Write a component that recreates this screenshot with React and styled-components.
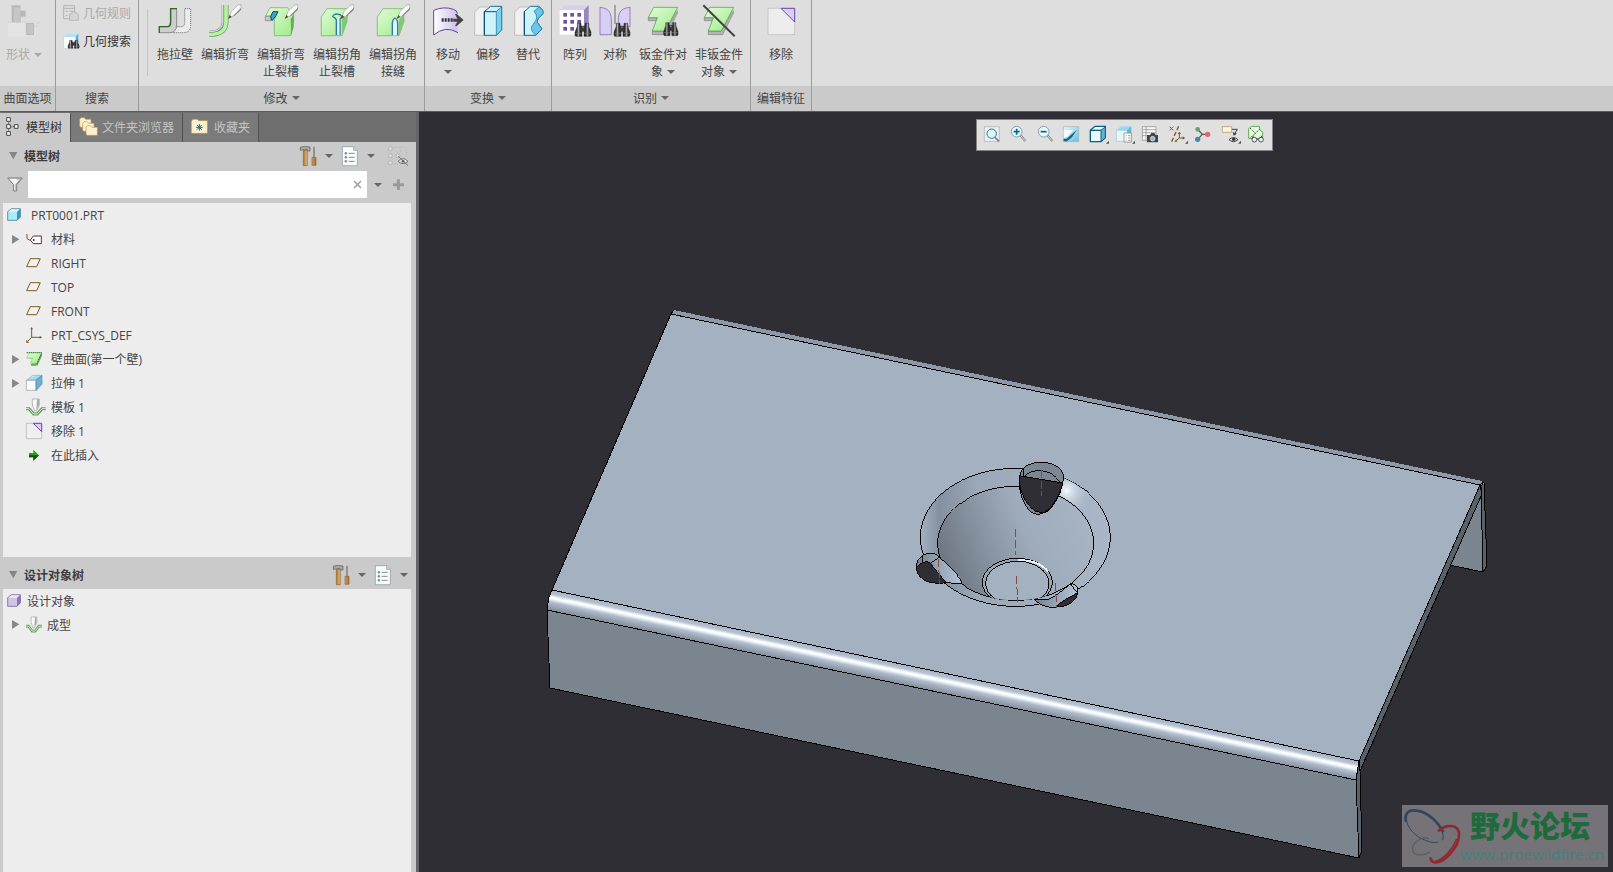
import React, { useState } from 'react'
import styled, { createGlobalStyle } from 'styled-components'

const GlobalStyle = createGlobalStyle`
  * {
    box-sizing: border-box;
  }

  body {
    margin: 0;
    font-family: 'Open Sans', 'Noto Sans CJK SC', sans-serif;
    font-size: 12px;
    color: #444;
  }

  button {
    border: 0;
    padding: 0;
    background: none;
    font: inherit;
    color: inherit;
  }
`

const Page = styled.div`
  display: flex;
  flex-direction: column;
  height: 100vh;
  background: #2f2e35;
`

const Ribbon = styled.header`
  display: flex;
  flex: none;
  background: linear-gradient(#dedede 86px, #cacaca 86px);
  border-bottom: 1px solid #5a5a5a;
`

const Group = styled.section`
  display: flex;
  flex-direction: column;
  border-right: 1px solid #9b9b9b;
`

const GroupBody = styled.div`
  display: flex;
  height: 86px;
  padding: ${props => props.$pad || '0 3px'};
`

const GroupTitle = styled.div`
  display: flex;
  align-items: center;
  justify-content: center;
  gap: 4px;
  height: 25px;
  padding-bottom: 2px;
  white-space: nowrap;
`

const Separator = styled.div`
  width: 1px;
  height: 67px;
  margin: 9px 5px 0;
  background: #c2c2c2;
`

const RibbonButton = styled.button`
  display: flex;
  flex-direction: column;
  align-items: center;
  width: ${props => props.$width}px;
  padding-top: 4px;
  line-height: 17px;
  color: ${props => (props.disabled ? '#a9a9a9' : '#444')};
`

const Label = styled.span`
  display: flex;
  align-items: center;
  gap: 4px;
  height: 17px;
  white-space: nowrap;
`

const Labels = styled.span`
  display: flex;
  flex-direction: column;
  align-items: center;
  margin-top: 10px;
`

const SearchList = styled.div`
  display: flex;
  flex-direction: column;
`

const SearchButton = styled.button`
  display: flex;
  align-items: center;
  gap: 4px;
  height: 28px;
  padding-bottom: 2px;
  color: ${props => (props.disabled ? '#a9a9a9' : '#333')};
`

const Caret = styled.span`
  flex: none;
  border: 4px solid transparent;
  border-top-color: ${props => props.$color || '#666'};
  border-bottom: 0;
`

const Svg = styled.svg`
  display: block;
  flex: none;
  overflow: visible;
`

const Main = styled.main`
  display: flex;
  flex: 1;
  min-height: 0;
`

const Panel = styled.aside`
  display: flex;
  flex-direction: column;
  flex: none;
  width: 419px;
  background: #cacaca;
  border-right: 3px solid #66656a;
`

const Tabs = styled.div`
  display: flex;
  height: 30px;
  padding-top: 1px;
  background: #6e6e6e;
`

const Tab = styled.button`
  display: flex;
  align-items: center;
  gap: ${props => props.$gap}px;
  padding: 0 8px 2px ${props => props.$left}px;
  border-right: 1px solid #515151;
  background: ${props => (props.$active ? '#cacaca' : '#7a7a7a')};
  color: ${props => (props.$active ? '#333' : '#c4c4c4')};
`

const PanelHeader = styled.div`
  display: flex;
  align-items: center;
  padding: ${props => props.$pad};
`

const PanelTitle = styled.h2`
  flex: 1;
  margin: 0 0 0 6px;
  font-size: 12px;
  font-weight: 700;
  color: #3c3c3c;
`

const HeaderTools = styled.div`
  display: flex;
  align-items: center;
  gap: 9px;
`

const IconButton = styled.button`
  display: flex;
  align-items: center;
  gap: 9px;
`

const HideButton = styled(IconButton)`
  padding-left: 4px;
`

const FilterRow = styled.div`
  display: flex;
  align-items: center;
  height: 27px;
  margin-bottom: 5px;
  padding: 0 12px 0 7px;
  gap: 5px;
`

const FilterBox = styled.div`
  display: flex;
  align-items: center;
  flex: 1;
  height: 27px;
  padding-right: 5px;
  background: #fff;
`

const FilterInput = styled.input`
  flex: 1;
  min-width: 0;
  height: 27px;
  padding: 0 6px;
  border: 0;
  outline: 0;
  background: transparent;
  font: inherit;
`

const FilterTools = styled.div`
  display: flex;
  align-items: center;
  gap: 11px;
  padding-left: 2px;
`

const Tree = styled.ul`
  flex: ${props => props.$grow} 1 0;
  min-height: 0;
  margin: 0 5px 0 3px;
  padding: 0;
  overflow: hidden;
  list-style: none;
  background: #ededed;
`

const TreeRow = styled.li`
  display: flex;
  align-items: center;
  height: 24px;
  padding-left: ${props => (props.$root ? 4 : 9)}px;
  white-space: nowrap;
`

const Expander = styled.span`
  width: 14px;
`

const TreeText = styled.span`
  margin-left: ${props => props.$gap}px;
`

const View = styled.section`
  position: relative;
  flex: 1;
  min-width: 0;
  overflow: hidden;
`

const Scene = styled.svg`
  display: block;
  width: 100%;
  height: 100%;
`

const ViewBar = styled.div`
  position: absolute;
  top: 7px;
  right: 340px;
  display: flex;
  align-items: center;
  justify-content: space-between;
  width: 297px;
  height: 32px;
  padding: 0 8px 2px 7px;
  border: 1px solid #858585;
  background: #e0e0e0;
`

const Watermark = styled.div`
  position: absolute;
  right: 5px;
  bottom: 5px;
  display: flex;
  width: 206px;
  height: 62px;
  background: #757378;
`

const WatermarkText = styled.div`
  display: flex;
  flex-direction: column;
  align-items: flex-end;
  flex: 1;
  padding-right: 4px;
`

const WatermarkName = styled.div`
  padding-right: 14px;
  font-family: 'Noto Sans CJK SC', sans-serif;
  font-size: 30px;
  font-weight: 900;
  line-height: 38px;
  color: #1f6a3c;
`

const WatermarkUrl = styled.a`
  font-family: 'Open Sans', sans-serif;
  font-size: 15px;
  line-height: 22px;
  color: #44807c;
  text-decoration: none;
`

// every glyph is drawn on a grid three times finer than its size on screen
const Icon = ({ x, y = 12, w = 32, h = 32, children }) => (
  <Svg width={w} height={h} viewBox={`${x} ${y} ${w * 3} ${h * 3}`} aria-hidden="true">
    {children}
  </Svg>
)

const Defs = () => (
  <Svg width="0" height="0" aria-hidden="true">
    <defs>
      <linearGradient id="green" x1="0" y1="0" x2="1" y2="1">
        <stop offset="0" stopColor="#e2fbd8" />
        <stop offset="1" stopColor="#9deb88" />
      </linearGradient>
      <linearGradient id="metal">
        <stop offset="0" stopColor="#1c1c1c" />
        <stop offset="0.3" stopColor="#3a3a3a" />
        <stop offset="0.5" stopColor="#a8a8a8" />
        <stop offset="0.7" stopColor="#333" />
        <stop offset="1" stopColor="#1c1c1c" />
      </linearGradient>
      <linearGradient id="sky" x1="0" y1="0" x2="1" y2="1">
        <stop offset="0" stopColor="#e6f8fe" />
        <stop offset="1" stopColor="#62bfe2" />
      </linearGradient>
      <linearGradient id="lilac">
        <stop offset="0" stopColor="#fff" />
        <stop offset="1" stopColor="#cdbfe8" />
      </linearGradient>
      <linearGradient id="wood">
        <stop offset="0" stopColor="#a87532" />
        <stop offset="0.4" stopColor="#f3d595" />
        <stop offset="1" stopColor="#a06c2c" />
      </linearGradient>
    </defs>
  </Svg>
)

const Pen = ({ x = 0 }) => (
  <g transform={`translate(${x} 0)`}>
    <path d="M108 53 L114 34 L135 14 L143 14 L143 27 L123 47 Z" fill="#f8f8f8" stroke="#a5a5a5" strokeWidth="2" />
    <path d="M120 47 L143 24 V29 L123 48 Z" fill="#777" />
    <path d="M104 57 L109 45 L115 51 Z" fill="#5a4436" />
  </g>
)

const Binoculars = ({ x = 0, y = 0 }) => (
  <g transform={`translate(${x} ${y})`} stroke="#2c2c2c" strokeWidth="1.5" strokeLinejoin="round">
    <path d="M7 3 H18 V10 L21 16 V42 H2 L0 38 V30 L7 12 Z" fill="url(#metal)" />
    <path d="M30 3 H41 V12 L48 30 V38 L46 42 H27 V16 L30 10 Z" fill="url(#metal)" />
    <path d="M18 11 H30 V27 H18 Z" fill="#3a3a3a" />
    <path d="M22 14 H26" stroke="#bbb" strokeWidth="3" />
    <path d="M1 33 H20 M28 33 H47" stroke="#8a8a8a" strokeWidth="2" />
  </g>
)

const ShapeIcon = () => (
  <Icon x={24}>
    <path d="M24 67 H107 V109 H24 Z" fill="#e4e4e4" />
    <path d="M35 16 H61 V32 H77 V50 H62 V67 H35 Z" fill="#b8b8b8" />
    <path d="M41 22 H61 V67 H41 Z" fill="#c6c6c6" />
    <path d="M80 70 H101 V104 H80 Z" fill="#c5c5c5" stroke="#a9a9a9" strokeWidth="2" />
    <path d="M24 67 H78 V104 M102 80 H112 V67 H120" fill="none" stroke="#bcbcbc" strokeWidth="2" strokeDasharray="3" />
  </Icon>
)

const DragWallIcon = () => (
  <Icon x={477}>
    <path d="M520 98 V80 H543 Q554 80 554 68 V26 H572 V76 Q572 98 550 98 Z" fill="#ececec" stroke="#666" strokeWidth="3" strokeDasharray="3 3" />
    <path d="M478 80 H500 Q511 80 511 68 V26 H530 V75 Q530 98 508 98 H478 Z" fill="#cecece" stroke="#8c8c8c" strokeWidth="3" />
    <path d="M478 99 V80 H500 Q512 80 512 68 V26 H531" fill="none" stroke="#2d6b2b" strokeWidth="4" />
  </Icon>
)

const EditBendIcon = () => (
  <Icon x={627}>
    <path d="M627 103 C662 103 678 92 678 65 V15" fill="none" stroke="#4fa342" strokeWidth="15" />
    <path d="M627 103 C662 103 678 92 678 65 V15" fill="none" stroke="#b5f2a3" strokeWidth="11" />
    <path d="M627 95 C657 95 668 84 668 62 V15" fill="none" stroke="#8e8e8e" strokeWidth="6" />
    <path d="M627 95 C657 95 668 84 668 62 V15" fill="none" stroke="#e2e2e2" strokeWidth="3" />
    <Pen x={580} />
  </Icon>
)

const BendReliefIcon = () => (
  <Icon x={45}>
    <path d="M47 48 L60 23 H112 L131 40 V60 L122 107 H73 V60 L84 36 H68 L62 48 Z" fill="url(#green)" stroke="#63ad53" strokeWidth="2" />
    <path d="M122 58 L131 42 V80 L124 107 Z" fill="#68ae58" />
    <path d="M46 49 H62 V62 H46 Z" fill="#cacaca" stroke="#777" strokeWidth="2" />
    <path d="M62 50 L69 35 H84 L75 51 L66 62 Z" fill="#3ba5c9" stroke="#124d6b" strokeWidth="3" />
    <Pen />
  </Icon>
)

const CornerReliefIcon = () => (
  <Icon x={213}>
    <path d="M214 51 L231 26 H294 L290 66 L276 107 H214 Z" fill="url(#green)" stroke="#63ad53" strokeWidth="2" />
    <path d="M276 57 L294 28 L292 66 L276 107 Z" fill="#83c873" />
    <path d="M248 51 C248 39 276 39 275 52 L270 57 V105 M248 50 Q257 53 259 60 V105" fill="none" stroke="#2a789e" strokeWidth="4" />
    <path d="M265 52 V105" stroke="#d7f5ff" strokeWidth="6" />
    <Pen x={168} />
  </Icon>
)

const CornerSeamIcon = () => (
  <Icon x={381}>
    <path d="M382 51 L399 26 H460 L462 64 L447 107 H382 Z" fill="url(#green)" stroke="#63ad53" strokeWidth="2" />
    <path d="M447 61 L462 34 V66 L447 107 Z" fill="#83c873" />
    <path d="M427 106 V67 Q435 42 443 67 V106" fill="#dcf5ff" stroke="#2a789e" strokeWidth="4" />
    <Pen x={336} />
  </Icon>
)

const MoveIcon = () => (
  <Icon x={546}>
    <path d="M551 31 Q582 18 614 29 Q625 33 622 42 V98 Q586 75 551 105 Z" fill="url(#lilac)" />
    <path d="M551 105 V31 Q582 18 610 28 Q623 32 622 41 M551 105 Q586 75 624 98" fill="none" stroke="#664494" strokeWidth="3" />
    <path d="M575 60 H612" stroke="#333" strokeWidth="11" strokeDasharray="6 3" />
    <path d="M610 56 H622 L615 42 H620 L641 60 L620 78 H615 L622 65 H610 Z" fill="#444" />
  </Icon>
)

const OffsetIcon = () => (
  <Icon x={666}>
    <path d="M674 36 L689 21 H720 L703 36 V106 H674 Z" fill="#f1f1f1" stroke="#aaa" strokeWidth="2" />
    <path d="M703 35 L722 19 H755 V89 L739 106 H703 Z" fill="#cdf2fd" stroke="#15718f" strokeWidth="3" />
    <path d="M739 35 L755 20 V89 L739 106 Z" fill="#79d0ef" stroke="#15718f" strokeWidth="2" />
    <path d="M703 35 H739 M703 34 V106" fill="none" stroke="#0d4b66" strokeWidth="3" />
  </Icon>
)

const ReplaceIcon = () => (
  <Icon x={786}>
    <path d="M794 36 L809 21 H840 L823 36 V106 H794 Z" fill="#f1f1f1" stroke="#aaa" strokeWidth="2" />
    <path d="M823 35 L841 19 H866 Q883 30 878 43 Q861 54 862 67 L876 87 L857 106 H823 Z" fill="#cdf2fd" stroke="#15718f" strokeWidth="3" />
    <path d="M852 34 L867 20 Q885 33 878 43 Q861 54 862 67 L876 87 L857 106 Q835 86 850 72 Q869 52 852 34 Z" fill="#68c6ea" stroke="#15718f" strokeWidth="2" />
    <path d="M823 34 V106" stroke="#0d4b66" strokeWidth="3" />
  </Icon>
)

const PatternIcon = () => (
  <Icon x={57}>
    <path d="M59 30 L73 16 H146 L131 30 Z" fill="#d8cff0" />
    <path d="M132 30 L146 16 V85 L132 104 Z" fill="#9885bd" />
    <path d="M59 30 H132 V104 H59 Z" fill="#fff" />
    {[39, 60, 81].map(y =>
      [70, 91, 112].map(x => <rect key={`${x}-${y}`} x={x} y={y} width="11" height="11" fill="#7250a1" />)
    )}
    <Binoculars x={105} y={67} />
  </Icon>
)

const SymmetryIcon = () => (
  <Icon x={177}>
    <path d="M180 22 C209 25 214 40 214 65 V104 H180 Z" fill="#d8cff5" stroke="#7752aa" strokeWidth="2" />
    <path d="M270 22 C239 25 235 40 235 65 V80 H270 Z" fill="#d8cff5" stroke="#7752aa" strokeWidth="2" />
    <path d="M225 15 V72" stroke="#888" strokeWidth="4" />
    <Binoculars x={222} y={67} />
  </Icon>
)

const SheetShape = ({ x = 0 }) => (
  <g transform={`translate(${x} 0)`}>
    <path d="M325 53 H352 V62 H325 Z M337 93 H375 L412 32 V40 L380 104 H337 Z" fill="#b3b3b3" stroke="#858585" strokeWidth="2" />
    <path d="M325 53 L341 22 H413 L376 93 H337 L352 53 Z" fill="url(#green)" stroke="#409637" strokeWidth="2" />
  </g>
)

const SheetFindIcon = () => (
  <Icon x={321}>
    <SheetShape />
    <g transform="translate(371 65) scale(.9 1)">
      <Binoculars />
    </g>
  </Icon>
)

const SheetOffIcon = () => (
  <Icon x={489}>
    <SheetShape x={168} />
    <path d="M490 16 L584 109" stroke="#444" strokeWidth="6" />
  </Icon>
)

const RemoveIcon = () => (
  <Icon x={675}>
    <path d="M684 25 H764 V104 H684 Z" fill="#ededed" stroke="#b5b5b5" strokeWidth="2" />
    <path d="M723 25 H764 V66 Z" fill="#d8ccf8" stroke="#6e4aa3" strokeWidth="3" />
  </Icon>
)

const GeomRuleIcon = () => (
  <Icon x={189} y={15} w={16} h={16}>
    <path d="M191 17 H224 V56 H191 Z M191 25 H224 M197 34 H203 M208 34 H220 M197 46 H203 M208 46 H215" fill="none" stroke="#b2b2b2" strokeWidth="3" />
    <path d="M209 43 L222 35 L235 43 V61 H209 Z" fill="#d5d5d5" stroke="#aaa" strokeWidth="2" />
  </Icon>
)

const GeomSearchIcon = () => (
  <Icon x={189} y={99} w={16} h={16}>
    <path d="M191 110 L202 101 H235 L227 110 Z" fill="#aee4f6" />
    <path d="M227 110 L235 101 V136 L227 145 Z" fill="#4db5da" />
    <path d="M191 110 H227 V145 H191 Z" fill="#fbfdff" stroke="#8abed2" />
    <g transform="translate(204 119) scale(.7 .62)">
      <Binoculars />
    </g>
  </Icon>
)

const ModelTreeIcon = () => (
  <Icon x={18} y={27} w={14} h={20}>
    <path d="M31 56 H42 M26 41 V50 M26 62 V70" stroke="#555" strokeWidth="2" />
    <path d="M20 29 H31 V40 H20 Z M20 50 H31 V61 H20 Z M20 71 H31 V82 H20 Z M43 50 H54 V61 H43 Z" fill="#fff" stroke="#444" strokeWidth="3" />
  </Icon>
)

const FolderShape = () => (
  <path d="M0 6 L4 1 H14 L18 6 H34 V30 H3 L0 26 Z" fill="#fff1cd" stroke="#c39648" strokeWidth="2" />
)

const FoldersIcon = () => (
  <Icon x={236} y={30} w={19} h={19}>
    <g transform="translate(238 31)"><FolderShape /></g>
    <g transform="translate(247 43)"><FolderShape /></g>
    <g transform="translate(257 55)"><FolderShape /></g>
  </Icon>
)

const FavouriteIcon = () => (
  <Icon x={573} y={36} w={17} h={15}>
    <path d="M574 43 L579 37 H592 L596 41 H622 V79 H574 Z" fill="#fff1cd" stroke="#c39648" strokeWidth="2" />
    <path d="M598 51 V71 M588 61 H608 M591 54 L605 68 M605 54 L591 68" stroke="#176d8c" strokeWidth="3" />
  </Icon>
)

const HammerIcon = () => (
  <Icon x={897} y={114} w={16} h={20}>
    <path d="M898 118 Q908 113 927 117 V129 H918 V124 L898 127 Z" fill="#aaa" stroke="#555" strokeWidth="2" />
    <path d="M907 127 H919 V173 H907 Z M933 148 H945 V172 H933 Z" fill="url(#wood)" stroke="#94652a" strokeWidth="2" />
    <path d="M939 116 V148" stroke="#777" strokeWidth="4" />
  </Icon>
)

const ListDocIcon = () => (
  <Icon x={1027} y={114} w={16} h={20}>
    <path d="M1028 116 H1062 L1073 127 V173 H1028 Z" fill="#f7fcfd" stroke="#81949c" strokeWidth="2" />
    <path d="M1062 116 V127 H1073" fill="#c8d8dd" stroke="#81949c" strokeWidth="2" />
    <path d="M1047 136 H1065 M1047 148 H1065 M1047 160 H1065" stroke="#555" strokeWidth="2" />
    <path d="M1036 134 H1041 V138 H1036 Z M1036 146 H1041 V150 H1036 Z M1036 158 H1041 V162 H1036 Z" fill="#fff" stroke="#555" strokeWidth="2" />
  </Icon>
)

const HideTreeIcon = () => (
  <Icon x={1161} y={114} w={20} h={20}>
    <path d="M1163 117 H1173 V127 H1163 Z M1163 138 H1173 V148 H1163 Z M1163 159 H1173 V169 H1163 Z M1186 138 H1196 V148 H1186 Z" fill="#e2e2e2" stroke="#aaa" strokeWidth="2" />
    <path d="M1180 118 H1198 V134 M1202 118 H1216 V145 M1180 168 H1196" fill="none" stroke="#b3b3b3" strokeWidth="2" strokeDasharray="4 3" />
    <path d="M1191 160 Q1206 144 1221 160 Q1206 174 1191 160 Z M1191 144 L1221 173" fill="#ddd" stroke="#777" strokeWidth="3" />
    <circle cx="1206" cy="160" r="4" fill="#666" />
  </Icon>
)

const FunnelIcon = () => (
  <Icon x={21} y={205} w={16} h={16}>
    <path d="M23 208 H67 L50 228 V247 H41 V228 Z" fill="#f4f4f4" stroke="#777" strokeWidth="3" />
    <path d="M50 211 H62 L48 227 V245" fill="none" stroke="#999" strokeWidth="3" />
  </Icon>
)

const ClearIcon = () => (
  <Icon x={1060} y={218} w={9} h={9}>
    <path d="M1063 221 L1084 242 M1084 221 L1063 242" stroke="#999" strokeWidth="4" />
  </Icon>
)

const PlusIcon = () => (
  <Icon x={1179} y={210} w={11} h={11}>
    <path d="M1195 211 V243 M1179 227 H1212" stroke="#999" strokeWidth="9" />
  </Icon>
)

const PartIcon = ({ front = '#ace9fb', top = '#e2f9ff', side = '#369bc2', line = '#226a8b' }) => (
  <Icon x={20} y={29} w={14} h={14}>
    <path d="M22 40 L33 31 H60 L50 40 Z" fill={top} />
    <path d="M50 40 L60 31 V56 L50 66 Z" fill={side} />
    <path d="M22 40 H50 V66 H22 Z" fill={front} />
    <path d="M22 40 L33 31 H60 V56 L50 66 H22 Z" fill="none" stroke={line} strokeWidth="2" />
  </Icon>
)

const MaterialIcon = () => (
  <Icon x={78} y={96} w={16} h={16}>
    <path d="M81 105 V119 L90 124" fill="none" stroke="#835316" strokeWidth="3" />
    <path d="M91 123 L100 111 H124 V134 H100 Z" fill="#fff" stroke="#6b301b" strokeWidth="3" />
    <circle cx="101" cy="123" r="3" fill="#6b301b" />
  </Icon>
)

const PlaneIcon = () => (
  <Icon x={78} y={168} w={16} h={16}>
    <path d="M80 203 L91 179 H121 L110 203 Z" fill="#f5f1e8" stroke="#7b5b2b" strokeWidth="3" />
  </Icon>
)

const CsysIcon = () => (
  <Icon x={78} y={384} w={16} h={16}>
    <path d="M95 387 V415 H124 M95 415 L80 430" fill="none" stroke="#7b5b2b" strokeWidth="3" />
    <path d="M91 391 L95 384 L99 391 Z M119 411 L126 415 L119 419 Z M79 422 V431 H88 Z" fill="#7b5b2b" />
  </Icon>
)

const WallIcon = () => (
  <Icon x={78} y={458} w={16} h={16}>
    <path d="M80 479 L98 481 L92 502 H112 L126 473 V464 Z" fill="#6fa564" />
    <path d="M80 479 L87 463 H125 L110 495 H91 L98 479 Z" fill="url(#green)" stroke="#8fdc7c" strokeWidth="2" />
    <path d="M80 463 H125 L111 496" fill="none" stroke="#173d16" strokeWidth="3" strokeDasharray="3 3" />
  </Icon>
)

const ExtrudeIcon = () => (
  <Icon x={78} y={528} w={16} h={16}>
    <path d="M79 544 L98 529 H126 L108 544 Z" fill="url(#sky)" stroke="#7fb4ca" strokeWidth="2" />
    <path d="M108 544 L126 529 V555 L108 575 Z" fill="#6fb0cf" stroke="#3a91b4" strokeWidth="2" />
    <path d="M79 544 H107 V574 H79 Z" fill="#fafafa" stroke="#999" strokeWidth="2" />
  </Icon>
)

const FormShape = () => (
  <>
    <path d="M78 623 H87 L101 639 H112 L126 623 H137" fill="none" stroke="#5c9d54" strokeWidth="9" />
    <path d="M78 623 H87 L101 639 H112 L126 623 H137" fill="none" stroke="#def3d7" strokeWidth="3" />
    <path d="M97 594 V612 L104 629 H110 L118 612 V594 Z" fill="#f9f9f9" stroke="#999" strokeWidth="2" />
    <path d="M111 595 H117 V612 L109 628 Z" fill="#aaa" />
  </>
)

const FormIcon = () => (
  <Icon x={78} y={594} w={16} h={17}>
    <FormShape />
  </Icon>
)

const FormSmallIcon = () => (
  <Icon x={0} y={0} w={16} h={16}>
    <g transform="scale(.81 .94) translate(-78 -594)">
      <FormShape />
    </g>
  </Icon>
)

const RemoveSmallIcon = () => (
  <Icon x={78} y={672} w={16} h={16}>
    <path d="M79 673 H125 V719 H79 Z" fill="#efefef" stroke="#aaa" strokeWidth="2" />
    <path d="M100 673 H125 V698 Z" fill="#d8ccf8" stroke="#6e4aa3" strokeWidth="3" />
  </Icon>
)

const InsertIcon = () => (
  <Icon x={78} y={744} w={16} h={16}>
    <path d="M87 762 H100 V752 L117 769 L100 785 V775 H87 Z" fill="#21a60c" />
    <path d="M87 769 H117 L100 785 V775 H87 Z" fill="#174e12" />
  </Icon>
)

const DownIcon = () => (
  <Icon x={28} y={132} w={9} h={8}>
    <path d="M28 132 H53 L41 154 Z" fill="#858585" />
  </Icon>
)

const RightIcon = () => (
  <Icon x={36} y={108} w={8} h={9}>
    <path d="M36 108 V135 L58 121 Z" fill="#888" />
  </Icon>
)

const Lens = ({ x, children }) => (
  <g transform={`translate(${x} 0)`}>
    <path d="M31 76 L46 93" stroke="#888" strokeWidth="7" />
    <path d="M31 76 L45 92" stroke="#ddd" strokeWidth="3" />
    <circle cx="20" cy="65" r="16" fill="#e8f7fc" stroke="#79a3b4" strokeWidth="3" />
    {children}
  </g>
)

const Corner = ({ x }) => <path d={`M${x} 101 H${x - 9} L${x} 92 Z`} fill="#555" />

const viewTools = [
  ['重新调整', 57, <>
    <path d="M58 50 H103 V94 H58 Z" fill="#eee" stroke="#aaa" strokeWidth="2" />
    <circle cx="80" cy="71" r="14" fill="#dff5fd" stroke="#207b9d" strokeWidth="3" />
    <path d="M90 82 L102 94" stroke="#888" strokeWidth="6" />
  </>],
  ['放大', 135, <Lens x={135}><path d="M20 56 V74 M11 65 H29" stroke="#0d6688" strokeWidth="5" /></Lens>],
  ['缩小', 213, <Lens x={213}><path d="M11 65 H29" stroke="#0d6688" strokeWidth="5" /></Lens>],
  ['重画', 291, <>
    <path d="M292 50 H338 V95 H292 Z" fill="url(#sky)" stroke="#aaa" strokeWidth="2" />
    <path d="M293 60 H322 L304 80 L293 84 Z" fill="#f2fbff" />
    <path d="M293 94 V86 L302 86 L332 60 L318 82 L303 94 Z" fill="#176583" />
  </>],
  ['显示样式', 369, <>
    <path d="M370 61 L384 49 H415 V83 L402 95 H370 Z" fill="#e9faff" stroke="#105d7d" strokeWidth="4" />
    <path d="M402 61 L415 50 V83 L402 95 Z" fill="#61b4d1" stroke="#105d7d" strokeWidth="3" />
    <path d="M370 61 H402" stroke="#105d7d" strokeWidth="4" />
    <Corner x={426} />
  </>],
  ['已保存方向', 450, <>
    <path d="M451 61 L465 49 H496 L484 61 Z" fill="#8fdcf5" />
    <path d="M483 61 L496 49 V84 L483 94 Z" fill="#66b5d0" />
    <path d="M451 61 H483 V94 H451 Z" fill="#e9f7fc" stroke="#9bc5d2" strokeWidth="2" />
    <path d="M474 69 H496 V96 H474 Z M479 77 H482 M486 77 H493 M479 84 H482 M486 84 H493 M479 91 H482 M486 91 H493" fill="#fff" stroke="#777" strokeWidth="2" />
    <Corner x={507} />
  </>],
  ['视图管理器', 531, <>
    <path d="M532 50 H573 V91 H532 Z M532 59 H573 M532 68 H573 M532 77 H573 M543 50 V91" fill="#f7f7f7" stroke="#888" strokeWidth="2" />
    <path d="M546 75 H555 L559 69 H568 L572 75 H579 V97 H546 Z" fill="#444" />
    <circle cx="563" cy="86" r="7" fill="#89bccc" stroke="#eee" strokeWidth="2" />
  </>],
  ['基准显示过滤器', 609, <>
    <path d="M638 49 L617 95" stroke="#795b25" strokeWidth="4" strokeDasharray="13 6" />
    <path d="M611 50 L622 61 M622 50 L611 61 M640 67 V84 H655 M640 84 L628 94" fill="none" stroke="#795b25" strokeWidth="3" />
    <path d="M635 72 L640 65 L645 72 Z M650 79 L657 84 L650 89 Z M630 88 L626 97 L635 94 Z" fill="#795b25" />
    <Corner x={666} />
  </>],
  ['旋转中心', 693, <>
    <path d="M701 58 L715 73 L701 88 M715 73 H731" fill="none" stroke="#555" strokeWidth="4" />
    <circle cx="701" cy="58" r="7" fill="#6d9f68" />
    <circle cx="701" cy="88" r="8" fill="#4489aa" />
    <circle cx="731" cy="73" r="8" fill="#dc6d68" />
  </>],
  ['注释显示', 768, <>
    <path d="M769 50 H797 V67 H769 Z" fill="#fff3d8" stroke="#aa8b59" strokeWidth="2" />
    <path d="M798 58 H814 L805 73" fill="none" stroke="#444" strokeWidth="3" />
    <path d="M800 66 L803 77 L813 71 Z" fill="#444" />
    <path d="M789 89 Q802 76 816 89 Q802 101 789 89 Z" fill="#ddd" stroke="#444" strokeWidth="3" />
    <circle cx="803" cy="88" r="5" fill="#333" />
    <Corner x={825} />
  </>],
  ['模型显示', 849, <>
    <path d="M851 56 L859 49 H884 V60 L893 66 V85 H851 Z" fill="#e7f8df" stroke="#5caa50" strokeWidth="3" />
    <path d="M855 54 L871 70 M871 70 L885 57 M871 70 L855 84" stroke="#2d592b" strokeWidth="3" strokeDasharray="4 3" />
    <path d="M861 85 L866 77 M893 85 L888 77 M875 88 H881" stroke="#444" strokeWidth="3" />
    <circle cx="868" cy="89" r="7" fill="#e9f3f5" stroke="#555" strokeWidth="3" />
    <circle cx="888" cy="89" r="7" fill="#e9f3f5" stroke="#555" strokeWidth="3" />
  </>],
]

const modelRows = [
  { text: '材料', icon: <MaterialIcon />, open: true },
  { text: 'RIGHT', icon: <PlaneIcon /> },
  { text: 'TOP', icon: <PlaneIcon /> },
  { text: 'FRONT', icon: <PlaneIcon /> },
  { text: 'PRT_CSYS_DEF', icon: <CsysIcon /> },
  { text: '壁曲面(第一个壁)', icon: <WallIcon />, open: true },
  { text: '拉伸 1', icon: <ExtrudeIcon />, open: true },
  { text: '模板 1', icon: <FormIcon /> },
  { text: '移除 1', icon: <RemoveSmallIcon /> },
  { text: '在此插入', icon: <InsertIcon /> },
]

const Tool = ({ icon, lines, width, caret, disabled }) => (
  <RibbonButton $width={width} disabled={disabled}>
    {icon}
    <Labels>
      {lines.map((line, i) => (
        <Label key={line}>
          {line}
          {caret === 'inline' && i === lines.length - 1 && <Caret $color={disabled ? '#a9a9a9' : '#666'} />}
        </Label>
      ))}
      {caret === 'below' && <Label><Caret /></Label>}
    </Labels>
  </RibbonButton>
)

const RibbonBar = () => (
  <Ribbon>
    <Group>
      <GroupBody $pad="0 7px 0 0">
        <Tool icon={<ShapeIcon />} lines={['形状']} width={48} caret="inline" disabled />
      </GroupBody>
      <GroupTitle>曲面选项</GroupTitle>
    </Group>
    <Group>
      <GroupBody $pad="0 7px">
        <SearchList>
          <SearchButton disabled><GeomRuleIcon />几何规则</SearchButton>
          <SearchButton><GeomSearchIcon />几何搜索</SearchButton>
        </SearchList>
      </GroupBody>
      <GroupTitle>搜索</GroupTitle>
    </Group>
    <Group>
      <GroupBody>
        <Separator />
        <Tool icon={<DragWallIcon />} lines={['拖拉壁']} width={44} />
        <Tool icon={<EditBendIcon />} lines={['编辑折弯']} width={56} />
        <Tool icon={<BendReliefIcon />} lines={['编辑折弯', '止裂槽']} width={56} />
        <Tool icon={<CornerReliefIcon />} lines={['编辑拐角', '止裂槽']} width={56} />
        <Tool icon={<CornerSeamIcon />} lines={['编辑拐角', '接缝']} width={56} />
      </GroupBody>
      <GroupTitle>修改<Caret /></GroupTitle>
    </Group>
    <Group>
      <GroupBody>
        <Tool icon={<MoveIcon />} lines={['移动']} width={40} caret="below" />
        <Tool icon={<OffsetIcon />} lines={['偏移']} width={40} />
        <Tool icon={<ReplaceIcon />} lines={['替代']} width={40} />
      </GroupBody>
      <GroupTitle>变换<Caret /></GroupTitle>
    </Group>
    <Group>
      <GroupBody>
        <Tool icon={<PatternIcon />} lines={['阵列']} width={40} />
        <Tool icon={<SymmetryIcon />} lines={['对称']} width={40} />
        <Tool icon={<SheetFindIcon />} lines={['钣金件对', '象']} width={56} caret="inline" />
        <Tool icon={<SheetOffIcon />} lines={['非钣金件', '对象']} width={56} caret="inline" />
      </GroupBody>
      <GroupTitle>识别<Caret /></GroupTitle>
    </Group>
    <Group>
      <GroupBody>
        <Tool icon={<RemoveIcon />} lines={['移除']} width={54} />
      </GroupBody>
      <GroupTitle>编辑特征</GroupTitle>
    </Group>
  </Ribbon>
)

const Header = ({ title, pad, children }) => (
  <PanelHeader $pad={pad}>
    <DownIcon />
    <PanelTitle>{title}</PanelTitle>
    <HeaderTools>
      <IconButton aria-label="设置"><HammerIcon /><Caret /></IconButton>
      <IconButton aria-label="显示"><ListDocIcon /><Caret /></IconButton>
      {children}
    </HeaderTools>
  </PanelHeader>
)

const Row = ({ text, icon, open, gap = 9 }) => (
  <TreeRow>
    <Expander>{open && <RightIcon />}</Expander>
    {icon}
    <TreeText $gap={gap}>{text}</TreeText>
  </TreeRow>
)

const Navigator = () => {
  const [filter, setFilter] = useState('')

  return (
    <Panel>
      <Tabs>
        <Tab $active $gap={6} $left={6}><ModelTreeIcon />模型树</Tab>
        <Tab $gap={4} $left={8}><FoldersIcon />文件夹浏览器</Tab>
        <Tab $gap={6} $left={8}><FavouriteIcon />收藏夹</Tab>
      </Tabs>
      <Header title="模型树" pad="4px 8px 5px 9px">
        <HideButton aria-label="隐藏" disabled><HideTreeIcon /></HideButton>
      </Header>
      <FilterRow>
        <FunnelIcon />
        <FilterBox>
          <FilterInput aria-label="过滤" value={filter} onChange={e => setFilter(e.target.value)} />
          <IconButton aria-label="清除" onClick={() => setFilter('')}><ClearIcon /></IconButton>
        </FilterBox>
        <FilterTools>
          <IconButton aria-label="过滤选项"><Caret /></IconButton>
          <IconButton aria-label="添加"><PlusIcon /></IconButton>
        </FilterTools>
      </FilterRow>
      <Tree $grow={5}>
        <TreeRow $root>
          <PartIcon />
          <TreeText $gap={10}>PRT0001.PRT</TreeText>
        </TreeRow>
        {modelRows.map(row => <Row key={row.text} {...row} />)}
      </Tree>
      <Header title="设计对象树" pad="8px 8px 4px 9px" />
      <Tree $grow={4}>
        <TreeRow $root>
          <PartIcon front="#cfc6e6" top="#eee9f8" side="#8d78b5" line="#64488f" />
          <TreeText $gap={6}>设计对象</TreeText>
        </TreeRow>
        <Row text="成型" icon={<FormSmallIcon />} open gap={5} />
      </Tree>
    </Panel>
  )
}

const Dimple = () => (
  <g transform="translate(900 440) scale(.33333)" fill="none" stroke="#000" strokeWidth="3">
    <ellipse cx="346" cy="292" rx="285" ry="207" fill="url(#rim)" />
    <ellipse cx="346" cy="292" rx="285" ry="207" fill="url(#shine)" stroke="none" />
    <ellipse cx="347" cy="310" rx="234" ry="171" fill="url(#cone)" />
    <g clipPath="url(#floor)">
      <ellipse cx="352" cy="427" rx="105" ry="72" fill="#98a5b4" />
      <path d="M355 360 Q420 362 444 395" stroke="#e6f2ff" strokeWidth="6" />
      <ellipse cx="352" cy="430" rx="95" ry="66" fill="#a4b1c1" />
    </g>

    <path d="M358 118 C360 82 385 68 420 67 C462 66 491 86 491 115 L480 158 C462 198 445 218 430 219 C410 227 396 221 384 207 C362 175 358 150 358 118 Z" fill="#7b8793" />
    <path d="M357 107 L488 129 C480 170 450 212 430 218 L408 215 C382 198 359 165 357 107 Z" fill="#2f2e35" />
    <path d="M371 84 V108 M375 108 C398 84 455 84 480 128" />

    <path d="M49 380 C50 350 75 338 95 340 C108 342 115 347 118 352 C150 380 184 408 185 432 L140 428 L65 400 Z" fill="url(#notch)" />
    <path d="M50 384 C60 366 82 360 92 371 L138 428 C110 432 80 428 65 415 C52 402 50 395 50 384 Z" fill="#2f2e35" />
    <path d="M67 347 V370 M92 369 L118 352" />

    <path d="M403 478 L440 480 C470 470 498 440 512 432 C525 430 535 440 533 455 C535 475 510 495 480 500 C450 505 425 500 403 478 Z" fill="url(#notch)" />
    <path d="M470 501 C475 487 510 472 533 458 C530 480 510 500 470 501 Z" fill="#2f2e35" />
    <path d="M512 432 L525 450 L533 458" />

    <path d="M424 90 V168 M346 268 V345 M350 408 L352 485 M116 357 L118 432 M467 430 L469 505" stroke="#85494c" strokeDasharray="24 8" />
  </g>
)

const Model = () => (
  <Scene viewBox="419 112 1194 760" preserveAspectRatio="xMidYMid meet" role="img" aria-label="PRT0001">
    <defs>
      <linearGradient id="bend" gradientUnits="userSpaceOnUse" x1="552" y1="590" x2="547.78" y2="609.95">
        <stop offset="0" stopColor="#a4b1c1" />
        <stop offset="0.2" stopColor="#b4c2d3" />
        <stop offset="0.35" stopColor="#fff" />
        <stop offset="0.43" stopColor="#f4f9ff" />
        <stop offset="0.6" stopColor="#aebccd" />
        <stop offset="1" stopColor="#818c99" />
      </linearGradient>
      <linearGradient id="rim">
        <stop offset="0" stopColor="#a4b1c1" />
        <stop offset="0.1" stopColor="#8290a0" />
        <stop offset="0.3" stopColor="#9ba8b8" />
        <stop offset="1" stopColor="#a9b7c8" />
      </linearGradient>
      <radialGradient id="shine" gradientUnits="userSpaceOnUse" cx="500" cy="152" r="80">
        <stop offset="0" stopColor="#f3f9ff" />
        <stop offset="1" stopColor="#a9b7c8" stopOpacity="0" />
      </radialGradient>
      <linearGradient id="cone" x1="0" y1="0.7" x2="1" y2="0.4">
        <stop offset="0" stopColor="#6a747f" />
        <stop offset="0.3" stopColor="#84909d" />
        <stop offset="0.6" stopColor="#9eabba" />
        <stop offset="1" stopColor="#a6b4c4" />
      </linearGradient>
      <linearGradient id="notch">
        <stop offset="0" stopColor="#74808c" />
        <stop offset="0.5" stopColor="#97a4b3" />
        <stop offset="1" stopColor="#b7c5d6" />
      </linearGradient>
      <clipPath id="floor">
        <path d="M113 310 A234 171 0 0 0 581 310 V200 H113 Z" />
      </clipPath>
    </defs>
    <g shapeRendering="crispEdges">
      <g stroke="#000" strokeLinejoin="round">
        <path d="M1481 495 L1449 565 L1483 572 L1487 566 L1484 483 Z" fill="#7b8590" />
        <path d="M1481 486 L1484 483 L1487 566 L1483 572 Z" fill="#59626b" />
        <path d="M671 314 L674 310 L1482 481 L1484 484 L1480 485 Z" fill="#8d99a8" stroke="none" />
        <path d="M671 314 L674 310 M1480 485 L1484 482" />
        <path d="M1480 485 L1482 494 L1360 771 L1359 761 Z" fill="#59626b" />
        <path d="M671 314 L1480 485 L1359 761 L552 590 Z" fill="#a4b1c1" />
        <path d="M547 610 L1356 780 L1359 858 L550 688 Z" fill="#7b8590" />
        <path d="M552 590 L1359 761 L1356 780 L547 610 L549 597 Z" fill="url(#bend)" />
        <path d="M1359 761 L1356 780 L1359 858 L1362 850 L1360 771 Z" fill="#59626b" />
      </g>
      <Dimple />
    </g>
  </Scene>
)

const Viewport = () => (
  <View>
    <Model />
    <ViewBar role="toolbar">
      {viewTools.map(([name, x, drawing]) => (
        <IconButton key={name} aria-label={name}>
          <Icon x={x} y={48} w={16} h={17}>{drawing}</Icon>
        </IconButton>
      ))}
    </ViewBar>
    <Watermark>
      <Icon x={36} y={30} w={50} h={62}>
        <g fill="none">
          <path d="M158 136 C168 105 125 48 76 45 C35 43 41 100 91 129 C110 139 131 146 145 141" stroke="#31475f" strokeWidth="3" />
          <path d="M48 80 C42 53 58 43 80 47 C114 51 145 82 160 112" stroke="#31475f" strokeWidth="8" />
          <path d="M144 109 C163 88 207 84 207 119 C207 158 158 209 130 201 Q120 197 123 187" stroke="#93292f" strokeWidth="8" />
          <path d="M150 106 Q169 92 183 95 M135 200 C164 192 189 160 200 132" stroke="#93292f" strokeWidth="5" />
          <path d="M117 132 C98 120 64 144 68 166 C73 187 108 180 119 170" stroke="#575f6b" strokeWidth="4" />
        </g>
      </Icon>
      <WatermarkText>
        <WatermarkName>野火论坛</WatermarkName>
        <WatermarkUrl href="#">www.proewildfire.cn</WatermarkUrl>
      </WatermarkText>
    </Watermark>
  </View>
)

const App = () => (
  <Page>
    <GlobalStyle />
    <Defs />
    <RibbonBar />
    <Main>
      <Navigator />
      <Viewport />
    </Main>
  </Page>
)

export default App
